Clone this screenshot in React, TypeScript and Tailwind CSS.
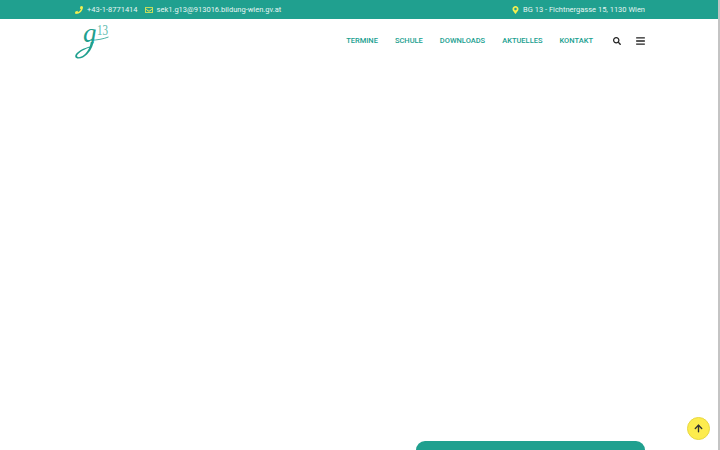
import { ArrowUp } from 'lucide-react'
import { FaPhone, FaRegEnvelope, FaMapMarkerAlt, FaBars, FaSearch } from 'react-icons/fa'

const navItems = ['Termine', 'Schule', 'Downloads', 'Aktuelles', 'Kontakt']

function Logo() {
  return (
    <svg width="36" height="36" viewBox="0 0 36 36" fill="none" className="overflow-visible">
      <defs>
        <clipPath id="bowl">
          <rect x="0" y="0" width="36" height="20.5" />
        </clipPath>
      </defs>
      <g clipPath="url(#bowl)">
        <text x="8" y="19" fontFamily="Liberation Serif, serif" fontStyle="italic" fontSize="27" fill="#20a08f">
          g
        </text>
      </g>
      {/* long tail of the g */}
      <path
        d="M18.5 19C17.5 25 14 31 8 34.4C4.5 36.2 0.5 35.8 0.2 33.4C0 30.5 5 26.5 14.5 23.6L14.5 24.4C7 27.2 2 30.8 2 33C2.2 34.6 5 34.5 7.5 33C12.5 29.8 15 24.5 15.8 19Z"
        fill="#20a08f"
      />
      <text x="22" y="11.5" fontFamily="Liberation Serif, serif" fontSize="15" textLength="11" lengthAdjust="spacingAndGlyphs" fill="#5dbaad">
        13
      </text>
      <path d="M16 17.2C22 17.2 28 16 33.5 14" stroke="#20a08f" strokeWidth="0.8" />
    </svg>
  )
}

export default function App() {
  return (
    <div className="h-screen overflow-hidden bg-white border-r-2 border-[#c4c4c4] flex flex-col font-['Roboto',sans-serif]">
      {/* top bar */}
      <div className="h-[19px] bg-[#20a08f] text-[#e6f5f2] text-[7.5px] shrink-0">
        <div className="w-[570px] h-full ml-[75px] flex items-center justify-between">
          <div className="flex items-center">
            <FaPhone className="text-[#f5ef4f] w-2 h-2 mr-[4px]" />
            <span>+43-1-8771414</span>
            <FaRegEnvelope className="text-[#f5ef4f] w-2 h-2 ml-[7px] mr-[4px]" />
            <span>sek1.g13@913016.bildung-wien.gv.at</span>
          </div>
          <div className="flex items-center">
            <FaMapMarkerAlt className="text-[#f5ef4f] w-[7px] h-2 mr-[4px]" />
            <span>BG 13 - Fichtnergasse 15, 1130 Wien</span>
          </div>
        </div>
      </div>

      {/* header */}
      <div className="w-[570px] ml-[75px] h-[44px] flex items-center justify-between shrink-0">
        <Logo />
        <nav className="flex items-center">
          {navItems.map((item) => (
            <a key={item} className="uppercase text-[7.5px] font-medium text-[#20a08f] mr-[17px]">
              {item}
            </a>
          ))}
          <FaSearch className="w-2 h-2 text-[#222] ml-[3px] mr-[15px]" />
          <FaBars className="w-[9px] h-[10px] text-[#222]" />
        </nav>
      </div>

      <div className="flex-1" />

      {/* card peeking in at the bottom */}
      <div className="w-[570px] ml-[75px] flex justify-end">
        <div className="w-[229px] h-[9px] bg-[#20a08f] rounded-t-[12px]" />
      </div>

      <button className="absolute right-[10px] top-[417px] w-[23px] h-[23px] rounded-full bg-[#fdec4e] border border-[#e8d840] flex items-center justify-center">
        <ArrowUp className="w-[11px] h-[11px] text-[#333]" strokeWidth={3} />
      </button>
    </div>
  )
}
